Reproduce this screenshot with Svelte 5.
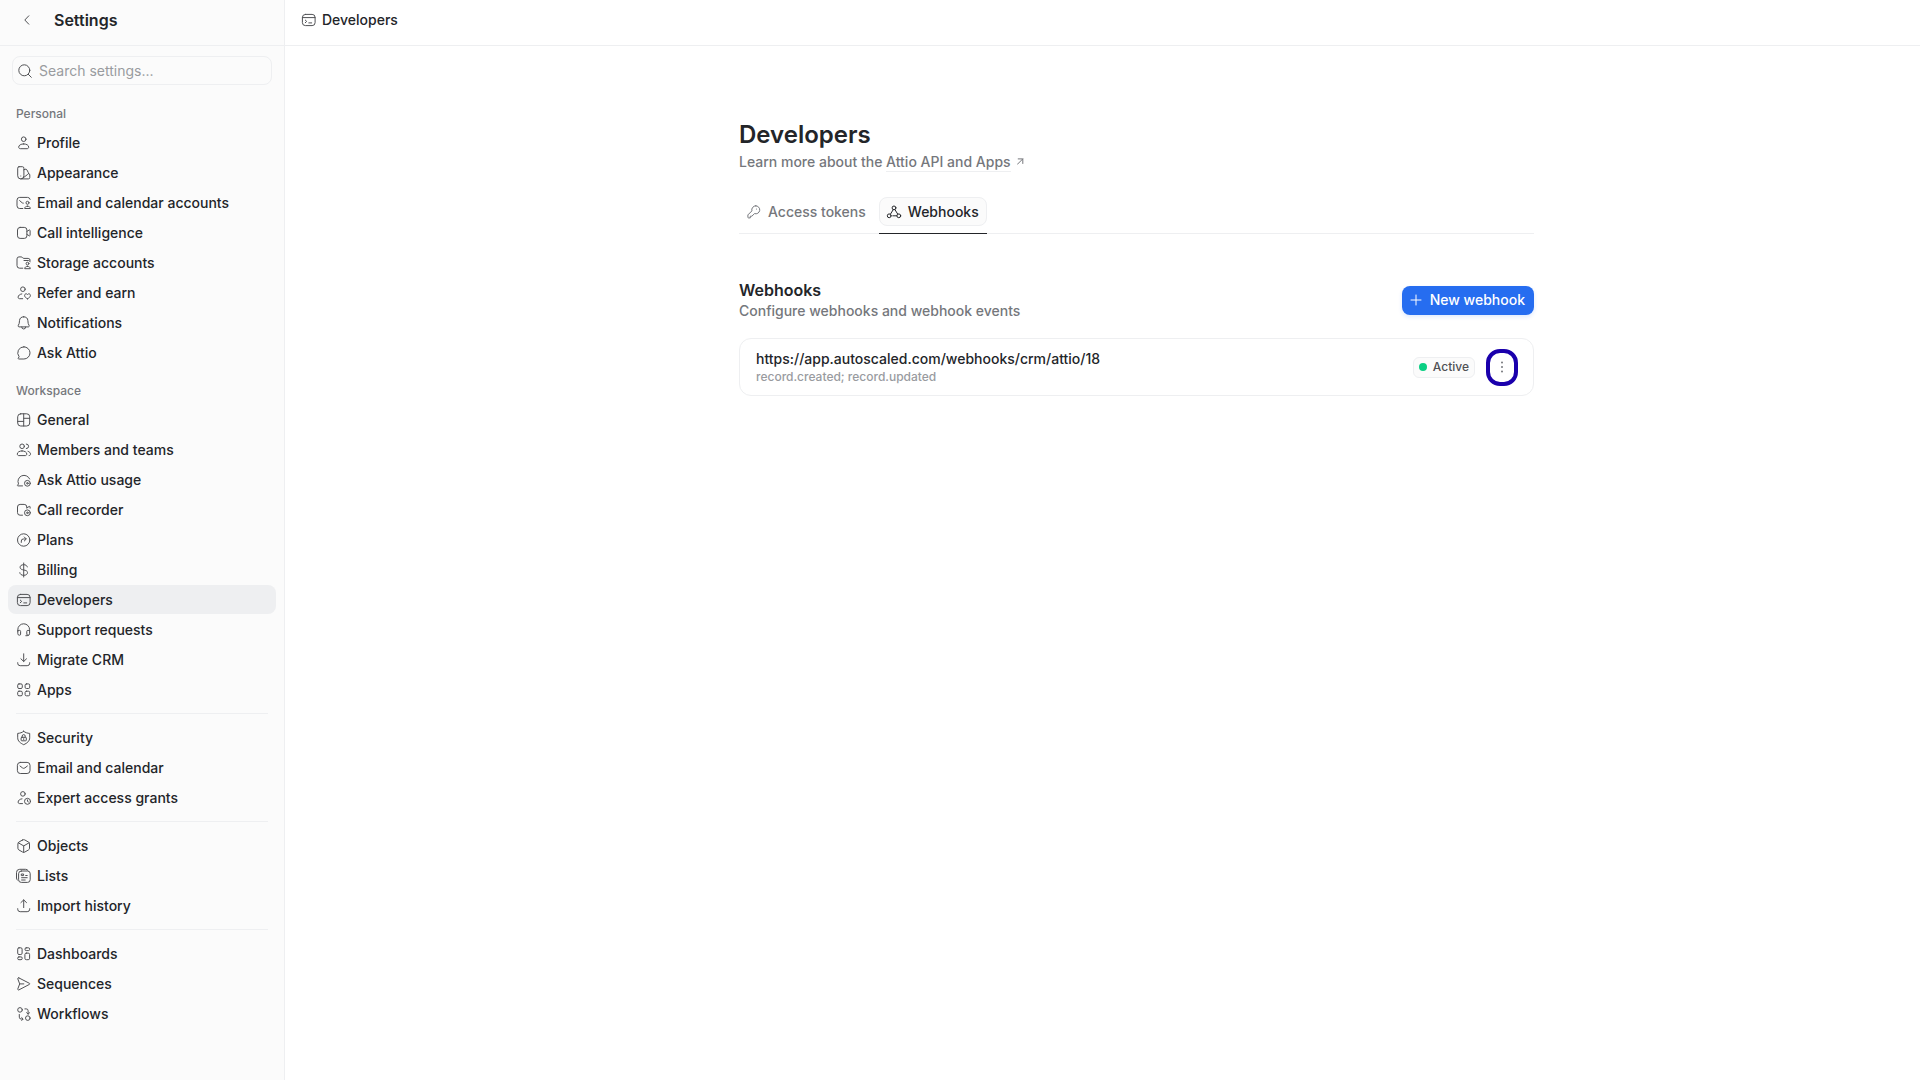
<script lang="ts">
  type Item = { label: string; icon: string };

  const personal: Item[] = [
    { label: 'Profile', icon: 'profile' },
    { label: 'Appearance', icon: 'appearance' },
    { label: 'Email and calendar accounts', icon: 'mailUser' },
    { label: 'Call intelligence', icon: 'video' },
    { label: 'Storage accounts', icon: 'folderUser' },
    { label: 'Refer and earn', icon: 'userHeart' },
    { label: 'Notifications', icon: 'bell' },
    { label: 'Ask Attio', icon: 'chat' },
  ];

  const workspace: Item[][] = [
    [
      { label: 'General', icon: 'layout' },
      { label: 'Members and teams', icon: 'users' },
      { label: 'Ask Attio usage', icon: 'chatGear' },
      { label: 'Call recorder', icon: 'videoGear' },
      { label: 'Plans', icon: 'plans' },
      { label: 'Billing', icon: 'dollar' },
      { label: 'Developers', icon: 'terminal' },
      { label: 'Support requests', icon: 'headset' },
      { label: 'Migrate CRM', icon: 'download' },
      { label: 'Apps', icon: 'apps' },
    ],
    [
      { label: 'Security', icon: 'shield' },
      { label: 'Email and calendar', icon: 'mail' },
      { label: 'Expert access grants', icon: 'userClock' },
    ],
    [
      { label: 'Objects', icon: 'cube' },
      { label: 'Lists', icon: 'lists' },
      { label: 'Import history', icon: 'upload' },
    ],
    [
      { label: 'Dashboards', icon: 'dashboards' },
      { label: 'Sequences', icon: 'send' },
      { label: 'Workflows', icon: 'workflow' },
    ],
  ];

  // stroke paths on a 14x14 grid
  const icons: Record<string, string> = {
    profile: 'M9 3.2a2.3 2.3 0 1 1-4.6 0a2.3 2.3 0 0 1 4.6 0ZM6.7 7.9c-2.8 0-5 1.3-5 3.2 0 1 .7 1.6 1.6 1.6h6.8c.9 0 1.6-.6 1.6-1.6 0-1.9-2.2-3.2-5-3.2Z',
    appearance: 'M2 .7h3.4a1.5 1.5 0 0 1 1.5 1.5v7.6a3.1 3.1 0 0 1-6.2 0V2.2A1.4 1.4 0 0 1 2 .7ZM6.9 3.8 8 3.3a1.4 1.4 0 0 1 1.9.6l1.4 2.6a1.4 1.4 0 0 1-.6 1.9L5.4 12.5M11.4 7.5a1.4 1.4 0 0 1 1.4 1.4v2.6a1.4 1.4 0 0 1-1.4 1.4H3.8M3.8 10h.01',
    mailUser: 'M5.8 12.5H2.7a2.7 2.7 0 0 1-2.7-2.7V4.1a2.7 2.7 0 0 1 2.7-2.7h7.9a2.7 2.7 0 0 1 2.6 2M2.6 4.6l2.6 2.2c.4.3.7.4 1.1.4M12 6.8a1.5 1.5 0 1 1-3 0a1.5 1.5 0 0 1 3 0ZM10.5 10.2c-1.6 0-2.8.8-2.8 2.3h5.6c0-1.5-1.2-2.3-2.8-2.3Z',
    video: 'M3.1 1.4h4.2A2.6 2.6 0 0 1 9.9 4v5.8a2.6 2.6 0 0 1-2.6 2.6H3.1A2.6 2.6 0 0 1 .5 9.8V4a2.6 2.6 0 0 1 2.6-2.6ZM9.9 5.4l2.2-1.3a.6.6 0 0 1 1 .5v4.6a.6.6 0 0 1-1 .5L9.9 8.4',
    folderUser: 'M5.8 12.2H2.6A2.6 2.6 0 0 1 0 9.6V2.9A2 2 0 0 1 2 .9h2c1.6 0 1.6 1.5 3 1.5h4.2a2 2 0 0 1 2 2M7 4.5h4.5a1.7 1.7 0 0 1 1.7 1.3M11.9 7.6a1.4 1.4 0 1 1-2.8 0a1.4 1.4 0 0 1 2.8 0ZM10.5 10.4c-1.6 0-2.8.8-2.8 2.3h5.6c0-1.5-1.2-2.3-2.8-2.3Z',
    userHeart: 'M8.2 3.2a2.3 2.3 0 1 1-4.6 0a2.3 2.3 0 0 1 4.6 0ZM4.8 7.9c-2 .3-3.700 1.6-3.700 3.400 0 .8.6 1.400 1.400 1.400h3.200M10.500 12.800c-1.700-.8-2.900-2-2.900-3.400 0-1.600 1.900-2.200 2.900-.9 1-1.300 2.900-.7 2.900.9 0 1.400-1.200 2.600-2.900 3.400Z',
    bell: 'M6.7.8a4.2 4.2 0 0 0-4.2 3.9L2.2 7.4 1.200 9.700c-.2.6.2 1.200.8 1.200h9.400c.6 0 1-.6.8-1.200l-1-2.300-.3-2.700A4.200 4.200 0 0 0 6.700.8ZM4.700 11a2 2 0 0 0 4 0',
    chat: 'M6.9.8a6.1 6.1 0 0 1 0 12.2H1.700a.5.5 0 0 1-.4-.8l.8-1.500A6.100 6.100 0 0 1 6.900.8Z',
    layout: 'M3.7.8h6a3 3 0 0 1 3 3v6.200a3 3 0 0 1-3 3h-6a3 3 0 0 1-3-3V3.800a3 3 0 0 1 3-3ZM6.700.8v12.200M.7 8.400h6M6.700 5.300h6',
    users: 'M7.4 3.3a2.3 2.3 0 1 1-4.6 0a2.3 2.3 0 0 1 4.6 0ZM5 7.9C2.4 7.9.3 9.200.3 11c0 .9.6 1.600 1.500 1.600h6.500c.9 0 1.500-.7 1.500-1.600C9.800 9.200 7.700 7.900 5 7.900ZM9.300 1a2.300 2.300 0 0 1 0 4.600M11 8.300c1.500.5 2.500 1.500 2.500 2.800 0 .9-.5 1.500-1.400 1.500',
    chatGear: 'M5.5 12.9H.9a.4.4 0 0 1-.3-.7l.9-1.300A6.100 6.100 0 1 1 12.700 6M13.300 10.300a2.900 2.900 0 1 1-5.800 0a2.900 2.900 0 0 1 5.800 0ZM11.200 10.300a.8.8 0 1 1-1.600 0a.8.8 0 0 1 1.600 0Z',
    videoGear: 'M5.5 12.2H3.100A2.600 2.600 0 0 1 .5 9.600V4a2.600 2.600 0 0 1 2.600-2.600h4.100A2.600 2.600 0 0 1 9.800 4v1M10 4.700l2.200-1.200a.6.6 0 0 1 .9.5v1.200M13.300 9.800a2.900 2.900 0 1 1-5.800 0a2.900 2.900 0 0 1 5.800 0ZM11.200 9.800a.8.8 0 1 1-1.600 0a.8.8 0 0 1 1.600 0Z',
    plans: 'M12.9 7a6.2 6.2 0 1 1-12.400 0a6.200 6.200 0 0 1 12.400 0ZM4.300 9.400V8a2 2 0 0 1 2-2h2.600M7.300 4 9.300 6 7.300 8',
    dollar: 'M6.7 0v14M10.300 3.900C10 2.500 8.700 1.700 6.700 1.700c-2.200 0-3.600 1-3.600 2.600 0 3.800 7.400 1.600 7.400 5.300 0 1.700-1.500 2.700-3.800 2.700-2.200 0-3.700-1-3.900-2.600',
    terminal: 'M3.4 1.400h6.700a3 3 0 0 1 3 3v5.200a3 3 0 0 1-3 3H3.400a3 3 0 0 1-3-3V4.400a3 3 0 0 1 3-3ZM.4 4.600h12.700M3.300 7.100l1.400 1.300-1.400 1.300M6.800 9.900h2.900',
    headset: 'M.8 8.300V6.700a5.900 5.900 0 0 1 11.800 0v3.600a2.400 2.400 0 0 1-2.400 2.400H8.800M.8 8.300v2.300a1.600 1.600 0 0 0 1.600 1.600h.2a1 1 0 0 0 1-1V8.400a1 1 0 0 0-1-1H.8M12.600 7.400h-1.800a1 1 0 0 0-1 1v2.800a1 1 0 0 0 1 1',
    download: 'M6.7.8v7.600M3.900 5.800l2.800 2.700 2.800-2.700M.7 9.700v.5a2.500 2.500 0 0 0 2.500 2.500h7a2.500 2.500 0 0 0 2.500-2.500v-.5',
    upload: 'M6.7 8.600V1M3.900 3.600 6.700.9l2.800 2.700M.7 9.700v.5a2.500 2.500 0 0 0 2.500 2.500h7a2.500 2.500 0 0 0 2.500-2.500v-.5',
    apps: 'M2 .9h2a1.3 1.3 0 0 1 1.3 1.3v2a1.3 1.3 0 0 1-1.3 1.3H2A1.300 1.300 0 0 1 .7 4.200v-2A1.300 1.300 0 0 1 2 .9ZM9.400.9h2a1.300 1.300 0 0 1 1.300 1.300v2a1.300 1.300 0 0 1-1.300 1.300h-2a1.300 1.300 0 0 1-1.300-1.300v-2A1.300 1.300 0 0 1 9.400.9ZM2 8.200h2a1.300 1.300 0 0 1 1.300 1.300v2A1.300 1.300 0 0 1 4 12.800H2a1.300 1.300 0 0 1-1.300-1.300v-2A1.300 1.300 0 0 1 2 8.200ZM9.400 8.200h2a1.300 1.300 0 0 1 1.300 1.300v2a1.300 1.300 0 0 1-1.300 1.300h-2a1.300 1.300 0 0 1-1.300-1.300v-2a1.300 1.300 0 0 1 1.300-1.300Z',
    shield: 'M6.7.3C5 1.700 3 2.200.7 2.400v4.400c0 3.200 2.500 5.300 6 6.900 3.500-1.600 6-3.700 6-6.900V2.400C10.400 2.200 8.400 1.700 6.700.3ZM4.800 6.300h3.800a.7.7 0 0 1 .7.7v2.100a.7.7 0 0 1-.7.7H4.800a.7.7 0 0 1-.7-.7V7a.7.7 0 0 1 .7-.7ZM5.200 6.200V5.100a1.500 1.500 0 0 1 3 0v1.100M6.700 7.700v.8',
    mail: 'M3.3 1.400h6.800a2.900 2.900 0 0 1 2.900 2.900v5.300a2.900 2.900 0 0 1-2.900 2.900H3.300A2.900 2.900 0 0 1 .4 9.600V4.300a2.900 2.900 0 0 1 2.900-2.900ZM3 5l2.500 1.900a2 2 0 0 0 2.400 0L10.400 5',
    userClock: 'M8.2 2.900a2.300 2.300 0 1 1-4.600 0a2.300 2.300 0 0 1 4.600 0ZM5 7.800c-2.200.2-3.900 1.600-3.900 3.400 0 .8.6 1.400 1.400 1.400h3M13.500 10.300a3 3 0 1 1-6 0a3 3 0 0 1 6 0ZM10.500 8.900v1.500l.9.5',
    cube: 'M5.7.9 2 3a2 2 0 0 0-1.100 1.800v4.400A2 2 0 0 0 2 11l3.700 2.100a2 2 0 0 0 2 0l3.700-2.100a2 2 0 0 0 1.100-1.800V4.800A2 2 0 0 0 11.400 3L7.700.9a2 2 0 0 0-2 0ZM1.300 3.800l5.400 3.100 5.400-3.100M6.700 6.900v6.400',
    lists: 'M4.3 2h6.200a2.700 2.700 0 0 1 2.700 2.700v6a2.700 2.700 0 0 1-2.700 2.700H4.300a2.700 2.700 0 0 1-2.700-2.700v-6A2.700 2.700 0 0 1 4.300 2ZM.6 11.300A3 3 0 0 1-.5 9V3.500A3.200 3.200 0 0 1 2.700.3h5.800A3 3 0 0 1 11 1.400M4.600 8.700h5.600M4.600 11h3.600M4.700 5h1.900v1.600H4.700ZM8.700 6.500h1.500',
    dashboards: 'M2 .8h1.800a1.300 1.300 0 0 1 1.300 1.300v4.100a1.300 1.300 0 0 1-1.300 1.300H2A1.300 1.300 0 0 1 .7 6.200V2.100A1.300 1.300 0 0 1 2 .8ZM9.200.8h2.200a1.200 1.200 0 0 1 1.200 1.200v.4a1.200 1.200 0 0 1-1.200 1.200H9.200A1.200 1.200 0 0 1 8 2.400V2A1.200 1.200 0 0 1 9.200.8ZM9.300 6.100h1.900a1.400 1.400 0 0 1 1.400 1.400v3.800a1.400 1.400 0 0 1-1.400 1.400H9.300a1.400 1.400 0 0 1-1.400-1.400V7.500a1.400 1.400 0 0 1 1.400-1.400ZM1.900 9.900h2.100a1.200 1.200 0 0 1 1.200 1.200v.4A1.200 1.200 0 0 1 4 12.700H1.900A1.200 1.200 0 0 1 .7 11.500v-.4a1.200 1.200 0 0 1 1.200-1.200Z',
    send: 'M1.900.9 12.400 6.300a.6.6 0 0 1 0 1.100L1.900 12.900a.8.8 0 0 1-1.100-1L2.700 6.900.8 1.900A.8.8 0 0 1 1.900.9ZM2.800 6.900h4',
    workflow: 'M5.3 2.900a2.300 2.300 0 1 1-4.600 0a2.300 2.300 0 0 1 4.600 0ZM13.100 11.100a2.300 2.300 0 1 1-4.600 0a2.300 2.300 0 0 1 4.600 0ZM7.900 1.900h1.400a1.800 1.800 0 0 1 1.800 1.800v3.400M9.600 5.700l1.500 1.500 1.500-1.500M2.300 7.500v2.700A1.800 1.800 0 0 0 4.100 12h1.500M4.700 10.600 6.200 12l-1.500 1.500',
    search: 'M11.8 6.300a5.500 5.500 0 1 1-11 0a5.500 5.500 0 0 1 11 0ZM10.300 10.300l3 3',
    back: 'M8.800 2.800 4.800 7l4 4.200',
    key: 'M8.800.8a4 4 0 0 0-3.900 5.100L.9 9.900v2.500a.5.5 0 0 0 .5.5h1.900v-1.700h1.600l2.600-2.600A4 4 0 1 0 8.800.8ZM9.400 4.100h.01',
    webhook: 'M8.900 2.900a1.900 1.900 0 1 1-3.800 0a1.900 1.900 0 0 1 3.800 0ZM4.100 10.800a1.900 1.900 0 1 1-3.800 0a1.900 1.900 0 0 1 3.800 0ZM13.700 10.800a1.900 1.900 0 1 1-3.800 0a1.900 1.900 0 0 1 3.800 0ZM6.200 4.700 3.400 9.200M7.900 4.600l2.900 4.600M5.800 10.800h4',
    arrow: 'M5.200 3.900h4.600v4.600M9.800 3.900 4.400 9.300',
    plus: 'M7 2v10M2 7h10',
  };

  let current = $state('Developers');
  let query = $state('');
</script>

{#snippet icon(name: string)}
  <svg class="icon" viewBox="0 0 14 14" aria-hidden="true"><path d={icons[name]} /></svg>
{/snippet}

{#snippet links(items: Item[])}
  {#each items as item}
    <a
      href="#{item.icon}"
      class="item"
      class:active={item.label === current}
      onclick={() => (current = item.label)}
    >
      {@render icon(item.icon)}
      <span>{item.label}</span>
    </a>
  {/each}
{/snippet}

<div class="app">
  <aside class="sidebar">
    <header class="bar side-bar">
      <button type="button" class="back" aria-label="Back">{@render icon('back')}</button>
      <strong class="side-title">Settings</strong>
    </header>

    <label class="search">
      {@render icon('search')}
      <input type="text" placeholder="Search settings..." aria-label="Search settings" bind:value={query} />
    </label>

    <nav class="nav">
      <h2 class="group">Personal</h2>
      {@render links(personal)}
    </nav>

    <nav class="nav">
      <h2 class="group">Workspace</h2>
      {#each workspace as items, i}
        {#if i > 0}<hr />{/if}
        {@render links(items)}
      {/each}
    </nav>
  </aside>

  <main class="main">
    <header class="bar main-bar">
      {@render icon('terminal')}
      <span>Developers</span>
    </header>

    <div class="content">
      <h1>Developers</h1>
      <p class="intro">
        Learn more about the <a href="#docs"><span class="underlined">Attio API and Apps</span>{@render icon('arrow')}</a>
      </p>

      <div class="tabs">
        <div class="tab-wrap">
          <button type="button" class="tab">{@render icon('key')}Access tokens</button>
        </div>
        <div class="tab-wrap selected">
          <button type="button" class="tab">{@render icon('webhook')}Webhooks</button>
        </div>
      </div>

      <section>
        <div class="section-head">
          <div>
            <h3>Webhooks</h3>
            <p class="muted">Configure webhooks and webhook events</p>
          </div>
          <button type="button" class="primary">{@render icon('plus')}New webhook</button>
        </div>

        <div class="card">
          <div class="hook">
            <div class="url">https://app.autoscaled.com/webhooks/crm/attio/18</div>
            <div class="events">record.created; record.updated</div>
          </div>
          <span class="badge"><i class="dot"></i>Active</span>
          <button type="button" class="more" aria-label="More options">
            <svg viewBox="0 0 14 14" aria-hidden="true">
              <circle cx="7" cy="2.4" r="1" />
              <circle cx="7" cy="7" r="1" />
              <circle cx="7" cy="11.6" r="1" />
            </svg>
          </button>
        </div>
      </section>
    </div>
  </main>
</div>

<style>
  :global(body) {
    margin: 0;
    background: #fff;
  }
  .app {
    display: flex;
    min-height: 100vh;
    font-family: Inter, 'Liberation Sans', sans-serif;
    font-size: 14px;
    font-weight: 500;
    line-height: 20px;
    color: #232529;
  }
  h1, h2, h3, p { margin: 0; }
  button, input {
    font: inherit;
    color: inherit;
  }
  button {
    cursor: pointer;
    padding: 0;
    border: none;
    background: none;
  }
  a {
    color: inherit;
    text-decoration: none;
  }
  .icon {
    flex: none;
    width: 14px;
    height: 14px;
    overflow: visible;
    fill: none;
    stroke: #505154;
    stroke-width: 1;
    stroke-linecap: round;
    stroke-linejoin: round;
  }

  .sidebar {
    flex: none;
    box-sizing: border-box;
    width: 285px;
    background: #fbfbfb;
    border-right: 1px solid #eeeff1;
  }
  .bar {
    box-sizing: border-box;
    height: 46px;
    padding-bottom: 5px;
    display: flex;
    align-items: center;
    border-bottom: 1px solid #eeeff1;
  }
  .side-bar {
    gap: 20px;
    padding-left: 20px;
  }
  .back { display: flex; }
  .side-title {
    font-size: 16px;
    font-weight: 600;
  }
  .search {
    display: flex;
    align-items: center;
    gap: 7px;
    box-sizing: border-box;
    height: 29px;
    margin: 10px 12px 16px;
    padding: 0 5px;
    border: 1px solid #eeeff1;
    border-radius: 8px;
  }
  .search input {
    flex: 1;
    min-width: 0;
    padding: 0;
    border: none;
    outline: none;
    background: none;
    font-weight: 400;
  }
  .search input::placeholder { color: #999b9f; }
  .nav {
    display: flex;
    flex-direction: column;
    gap: 1px;
    padding: 0 8px;
    margin-bottom: 11px;
  }
  .group {
    padding-left: 8px;
    font-size: 12px;
    font-weight: 500;
    line-height: 26px;
    color: #75777c;
  }
  .item {
    display: flex;
    align-items: center;
    gap: 6px;
    height: 29px;
    padding-left: 9px;
    border-radius: 8px;
  }
  .item.active { background: #eeeff1; }
  hr {
    align-self: stretch;
    margin: 8px;
    border: none;
    border-top: 1px solid #eeeff1;
  }

  .main {
    flex: 1;
    min-width: 0;
  }
  .main-bar {
    gap: 6px;
    padding-left: 17px;
  }
  .content {
    box-sizing: border-box;
    max-width: 863px;
    margin: 0 auto;
    padding: 72px 0 40px 68px;
  }
  h1 {
    font-size: 24px;
    font-weight: 600;
    line-height: 34px;
  }
  .intro, .muted {
    color: #75777c;
  }
  .intro a {
    display: inline-flex;
    align-items: center;
    gap: 2px;
  }
  .intro .icon { stroke: #75777c; }
  .underlined {
    line-height: 18px;
    box-shadow: 0 1px #eeeff1;
  }
  .tabs {
    display: flex;
    gap: 5px;
    margin-top: 25px;
    border-bottom: 1px solid #eeeff1;
  }
  .tab-wrap {
    padding-bottom: 7px;
    margin-bottom: -1px;
    border-bottom: 1px solid transparent;
  }
  .selected { border-bottom-color: #232529; }
  .tab {
    display: flex;
    align-items: center;
    gap: 7px;
    height: 29px;
    padding: 0 7px;
    border: 1px solid transparent;
    border-radius: 8px;
    color: #75777c;
  }
  .tab .icon { stroke: #75777c; }
  .selected .tab {
    background: #fbfbfb;
    border-color: #eeeff1;
    color: #232529;
  }
  .selected .tab .icon { stroke: #232529; }
  section { margin-top: 45px; }
  .section-head {
    display: flex;
    align-items: center;
    justify-content: space-between;
    margin-bottom: 17px;
  }
  h3 {
    font-size: 16px;
    font-weight: 600;
    line-height: 22px;
  }
  .primary {
    display: flex;
    align-items: center;
    gap: 7px;
    height: 29px;
    padding: 0 9px 0 7px;
    border-radius: 8px;
    background: #266df0;
    color: #fff;
    box-shadow: 0 2px 4px rgba(38, 109, 240, 0.14);
  }
  .primary .icon { stroke: #fff; }
  .card {
    display: flex;
    align-items: center;
    box-sizing: border-box;
    min-height: 58px;
    padding: 0 15px 0 16px;
    border: 1px solid #eeeff1;
    border-radius: 12px;
  }
  .hook { flex: 1; }
  .events {
    font-size: 12px;
    line-height: 16px;
    color: #999b9f;
  }
  .badge {
    display: flex;
    align-items: center;
    gap: 6px;
    box-sizing: border-box;
    height: 21px;
    padding: 0 5px;
    margin-right: 11px;
    border: 1px solid #eeeff1;
    border-radius: 6px;
    background: #fbfbfb;
    font-size: 12px;
    color: #505154;
  }
  .dot {
    width: 8px;
    height: 8px;
    border-radius: 50%;
    background: #0acf83;
  }
  .more {
    display: grid;
    place-items: center;
    box-sizing: border-box;
    width: 32px;
    height: 37px;
    border: 4px solid #1a00ac;
    border-radius: 14px;
  }
  .more svg {
    width: 14px;
    height: 14px;
    fill: #75777c;
  }
</style>
